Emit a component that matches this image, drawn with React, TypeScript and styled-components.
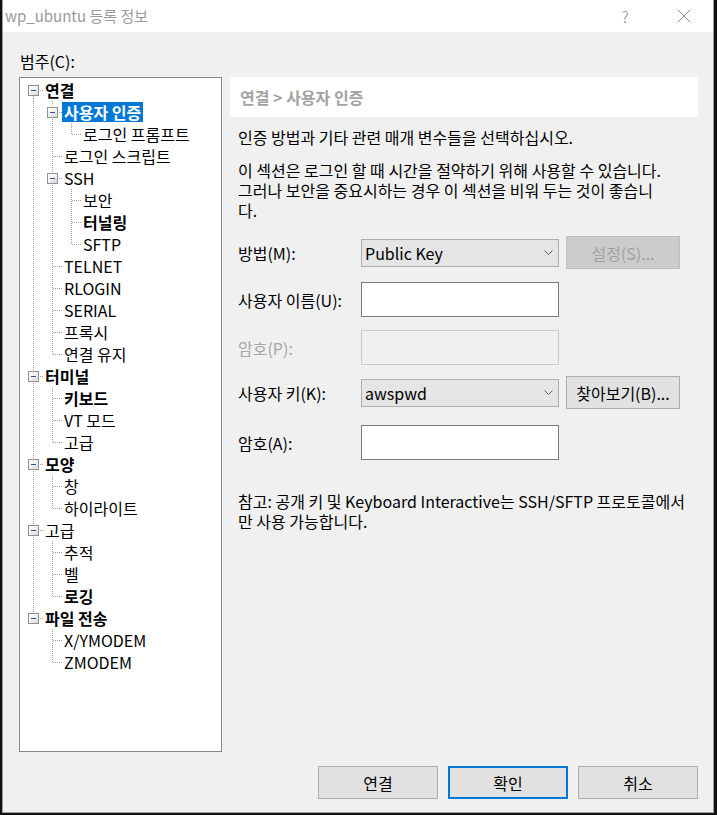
import React from "react";
import styled, { createGlobalStyle, css } from "styled-components";

const FONT = `"Noto Sans CJK KR", "Noto Sans", sans-serif`;

const GlobalStyle = createGlobalStyle`
  html, body {
    margin: 0;
    padding: 0;
    background: #111111;
  }
  body {
    font-family: ${FONT};
    overflow: hidden;
  }
`;

type TreeNode = {
  label: string;
  bold?: boolean;
  selected?: boolean;
  children?: TreeNode[];
};

const TREE: TreeNode[] = [
  {
    label: "연결",
    bold: true,
    children: [
      {
        label: "사용자 인증",
        bold: true,
        selected: true,
        children: [{ label: "로그인 프롬프트" }],
      },
      { label: "로그인 스크립트" },
      {
        label: "SSH",
        children: [{ label: "보안" }, { label: "터널링", bold: true }, { label: "SFTP" }],
      },
      { label: "TELNET" },
      { label: "RLOGIN" },
      { label: "SERIAL" },
      { label: "프록시" },
      { label: "연결 유지" },
    ],
  },
  {
    label: "터미널",
    bold: true,
    children: [{ label: "키보드", bold: true }, { label: "VT 모드" }, { label: "고급" }],
  },
  { label: "모양", bold: true, children: [{ label: "창" }, { label: "하이라이트" }] },
  {
    label: "고급",
    children: [{ label: "추적" }, { label: "벨" }, { label: "로깅", bold: true }],
  },
  { label: "파일 전송", bold: true, children: [{ label: "X/YMODEM" }, { label: "ZMODEM" }] },
];

type FlatRow = {
  key: string;
  node: TreeNode;
  guides: boolean[];
  last: boolean;
  firstRoot: boolean;
};

function flatten(nodes: TreeNode[], guides: boolean[] = [], out: FlatRow[] = [], path = "") {
  nodes.forEach((node, i) => {
    const last = i === nodes.length - 1;
    const key = `${path}/${i}`;
    out.push({ key, node, guides, last, firstRoot: guides.length === 0 && i === 0 });
    if (node.children) flatten(node.children, [...guides, !last], out, key);
  });
  return out;
}

const ROWS = flatten(TREE);

/* window chrome */

const Window = styled.div`
  width: 712px;
  height: 813px;
  margin-left: 2px;
  box-sizing: border-box;
  border: 1px solid #9c9c9c;
  border-top: none;
  background: #f0f0f0;
  display: flex;
  flex-direction: column;
  font-family: ${FONT};
  font-size: 16px;
  line-height: 20px;
  color: #000;
`;

const TitleBar = styled.div`
  height: 32px;
  flex: none;
  background: #ffffff;
  display: flex;
  align-items: center;
`;

const Title = styled.div`
  padding-left: 2px;
  font-size: 15px;
  color: #9a9a9a;
  white-space: nowrap;
`;

const TitleButton = styled.div<{ $w: number }>`
  width: ${(p) => p.$w}px;
  height: 32px;
  display: flex;
  align-items: center;
  justify-content: center;
  color: #8a8a8a;
  font-size: 16px;
  font-weight: 300;
`;

const TitleButtons = styled.div`
  margin-left: auto;
  display: flex;
`;

const Body = styled.div`
  flex: 1;
  display: flex;
  flex-direction: column;
  padding: 19px 15px 0 16px;
`;

const CategoryLabel = styled.div`
  height: 20px;
  padding-left: 1px;
`;

const Main = styled.div`
  margin-top: 6px;
  display: flex;
  gap: 8px;
  height: 675px;
`;

/* tree */

const TreePanel = styled.div`
  width: 203px;
  box-sizing: border-box;
  border: 1px solid #828790;
  background: #ffffff;
  padding: 1px 0 0 4px;
`;

const TreeRow = styled.div`
  display: flex;
  align-items: center;
  height: 22px;
`;

type VLine = "full" | "top" | "bottom" | "none";

const dotsV = "repeating-linear-gradient(to bottom, #a0a0a0 0 1px, transparent 1px 2px)";
const dotsH = "repeating-linear-gradient(to right, #a0a0a0 0 1px, transparent 1px 2px)";

const Guide = styled.span<{ $v: VLine; $h: boolean }>`
  position: relative;
  flex: none;
  width: 19px;
  height: 22px;

  ${(p) =>
    p.$v !== "none" &&
    css`
      &::before {
        content: "";
        position: absolute;
        left: 9px;
        width: 1px;
        top: ${p.$v === "bottom" ? 11 : 0}px;
        height: ${p.$v === "full" ? 22 : 11}px;
        background: ${dotsV};
      }
    `}

  ${(p) =>
    p.$h &&
    css`
      &::after {
        content: "";
        position: absolute;
        left: 10px;
        top: 11px;
        width: 9px;
        height: 1px;
        background: ${dotsH};
      }
    `}
`;

const Expander = styled.span`
  position: absolute;
  z-index: 1;
  left: 4px;
  top: 6px;
  width: 9px;
  height: 9px;
  border: 1px solid #919191;
  background: linear-gradient(135deg, #ffffff 0%, #f4f4f4 45%, #d6d6d6 100%);

  &::after {
    content: "";
    position: absolute;
    left: 2px;
    top: 4px;
    width: 5px;
    height: 1px;
    background: #2e4f94;
  }
`;

const NodeLabel = styled.span<{ $bold?: boolean; $selected?: boolean }>`
  height: 20px;
  padding: 0 2px;
  white-space: nowrap;
  font-weight: ${(p) => (p.$bold ? 700 : 400)};
  background: ${(p) => (p.$selected ? "#0078d7" : "transparent")};
  color: ${(p) => (p.$selected ? "#ffffff" : "#000000")};
`;

/* right side */

const Panel = styled.div`
  width: 468px;
  display: flex;
  flex-direction: column;
`;

const Header = styled.div`
  height: 40px;
  flex: none;
  background: #ffffff;
  padding-left: 10px;
  line-height: 40px;
  font-weight: 700;
  color: #a3a3a3;
`;

const Text = styled.div<{ $mt: number }>`
  margin-top: ${(p) => p.$mt}px;
  padding-left: 8px;
  white-space: nowrap;
`;

const FormRow = styled.div<{ $h: number; $mt: number }>`
  display: flex;
  align-items: center;
  height: ${(p) => p.$h}px;
  margin-top: ${(p) => p.$mt}px;
  padding-left: 8px;
`;

const FieldLabel = styled.span<{ $disabled?: boolean }>`
  width: 123px;
  flex: none;
  white-space: nowrap;
  color: ${(p) => (p.$disabled ? "#a6a6a6" : "#000000")};
`;

const Combo = styled.div`
  width: 198px;
  height: 28px;
  box-sizing: border-box;
  border: 1px solid #adadad;
  background: #e5e5e5;
  display: flex;
  align-items: center;
  justify-content: space-between;
  padding: 0 5px 0 3px;
`;

const TextBox = styled.div<{ $disabled?: boolean }>`
  width: 198px;
  height: 35px;
  box-sizing: border-box;
  border: 1px solid ${(p) => (p.$disabled ? "#cccccc" : "#7a7a7a")};
  background: ${(p) => (p.$disabled ? "#f0f0f0" : "#ffffff")};
`;

const Button = styled.div<{ $w: number; $disabled?: boolean; $default?: boolean }>`
  width: ${(p) => p.$w}px;
  height: 33px;
  box-sizing: border-box;
  flex: none;
  display: flex;
  align-items: center;
  justify-content: center;
  white-space: nowrap;
  border: ${(p) =>
    p.$default ? "2px solid #0078d7" : `1px solid ${p.$disabled ? "#bfbfbf" : "#adadad"}`};
  background: ${(p) => (p.$disabled ? "#cccccc" : "#e1e1e1")};
  color: ${(p) => (p.$disabled ? "#a0a0a0" : "#000000")};
`;

const SideButton = styled(Button)`
  margin-left: 7px;
`;

const Footer = styled.div`
  margin-top: 14px;
  display: flex;
  justify-content: flex-end;
  gap: 10px;
`;

function Chevron() {
  return (
    <svg width="9" height="5" viewBox="0 0 9 5">
      <polyline points="0.5,0.5 4.5,4.5 8.5,0.5" fill="none" stroke="#606060" strokeWidth="1" />
    </svg>
  );
}

function CloseIcon() {
  return (
    <svg width="14" height="14" viewBox="0 0 14 14">
      <path d="M0.5 0.5 L13.5 13.5 M13.5 0.5 L0.5 13.5" stroke="#8c8c8c" strokeWidth="1" fill="none" />
    </svg>
  );
}

function CategoryTree() {
  return (
    <TreePanel>
      {ROWS.map((row) => (
        <TreeRow key={row.key}>
          {row.guides.map((g, i) => (
            <Guide key={i} $v={g ? "full" : "none"} $h={false} />
          ))}
          <Guide $v={row.firstRoot ? "bottom" : row.last ? "top" : "full"} $h>
            {row.node.children && <Expander />}
          </Guide>
          <NodeLabel $bold={row.node.bold} $selected={row.node.selected}>
            {row.node.label}
          </NodeLabel>
        </TreeRow>
      ))}
    </TreePanel>
  );
}

export default function App() {
  return (
    <>
      <GlobalStyle />
      <Window>
        <TitleBar>
          <Title>wp_ubuntu 등록 정보</Title>
          <TitleButtons>
            <TitleButton $w={60}>?</TitleButton>
            <TitleButton $w={58}>
              <CloseIcon />
            </TitleButton>
          </TitleButtons>
        </TitleBar>
        <Body>
          <CategoryLabel>범주(C):</CategoryLabel>
          <Main>
            <CategoryTree />
            <Panel>
              <Header>연결 &gt; 사용자 인증</Header>
              <Text $mt={10}>인증 방법과 기타 관련 매개 변수들을 선택하십시오.</Text>
              <Text $mt={13}>
                이 섹션은 로그인 할 때 시간을 절약하기 위해 사용할 수 있습니다.
                <br />
                그러나 보안을 중요시하는 경우 이 섹션을 비워 두는 것이 좋습니
                <br />
                다.
              </Text>
              <FormRow $h={33} $mt={16}>
                <FieldLabel>방법(M):</FieldLabel>
                <Combo>
                  <span>Public Key</span>
                  <Chevron />
                </Combo>
                <SideButton $w={114} $disabled>
                  설정(S)...
                </SideButton>
              </FormRow>
              <FormRow $h={35} $mt={13}>
                <FieldLabel>사용자 이름(U):</FieldLabel>
                <TextBox />
              </FormRow>
              <FormRow $h={35} $mt={13}>
                <FieldLabel $disabled>암호(P):</FieldLabel>
                <TextBox $disabled />
              </FormRow>
              <FormRow $h={33} $mt={11}>
                <FieldLabel>사용자 키(K):</FieldLabel>
                <Combo>
                  <span>awspwd</span>
                  <Chevron />
                </Combo>
                <SideButton $w={114}>찾아보기(B)...</SideButton>
              </FormRow>
              <FormRow $h={35} $mt={16}>
                <FieldLabel>암호(A):</FieldLabel>
                <TextBox />
              </FormRow>
              <Text $mt={31}>
                참고: 공개 키 및 Keyboard Interactive는 SSH/SFTP 프로토콜에서
                <br />
                만 사용 가능합니다.
              </Text>
            </Panel>
          </Main>
          <Footer>
            <Button $w={120}>연결</Button>
            <Button $w={120} $default>
              확인
            </Button>
            <Button $w={120}>취소</Button>
          </Footer>
        </Body>
      </Window>
    </>
  );
}
